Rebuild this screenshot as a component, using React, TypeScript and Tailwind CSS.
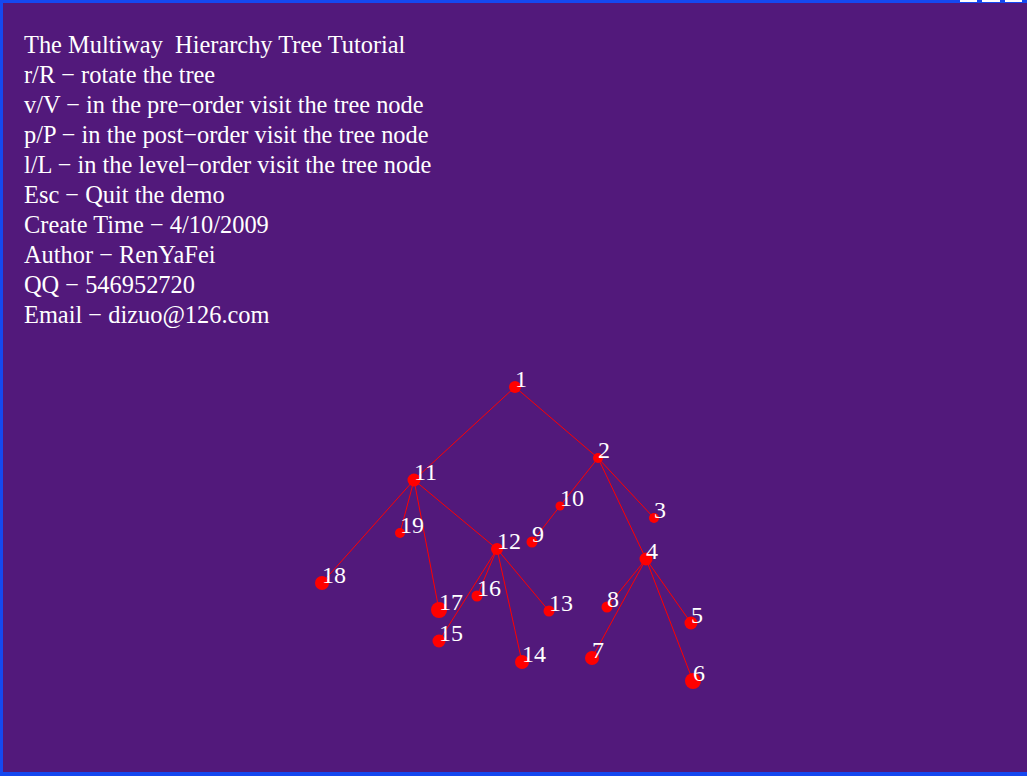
const lines = [
  'The Multiway  Hierarchy Tree Tutorial',
  'r/R − rotate the tree',
  'v/V − in the pre−order visit the tree node',
  'p/P − in the post−order visit the tree node',
  'l/L − in the level−order visit the tree node',
  'Esc − Quit the demo',
  'Create Time − 4/10/2009',
  'Author − RenYaFei',
  'QQ − 546952720',
  'Email − dizuo@126.com',
];

// node id -> [x, y, radius] in page coordinates
const nodes: Record<number, [number, number, number]> = {
  1: [515, 387, 6],
  2: [598, 458, 5],
  3: [654, 518, 5],
  4: [646, 559, 6.5],
  5: [691, 623, 6.5],
  6: [693, 681, 8],
  7: [592, 658, 7],
  8: [607, 607, 5.5],
  9: [532, 542, 5.5],
  10: [560, 506, 4.5],
  11: [414, 480, 6.5],
  12: [497, 549, 6],
  13: [549, 611, 5.5],
  14: [522, 662, 7],
  15: [439, 641, 6.5],
  16: [477, 596, 5.5],
  17: [439, 610, 8],
  18: [322, 583, 7],
  19: [400, 533, 5],
};

const edges: [number, number][] = [
  [1, 2], [1, 11], [2, 10], [10, 9], [2, 3], [2, 4],
  [4, 8], [4, 7], [4, 5], [4, 6],
  [11, 18], [11, 19], [11, 17], [11, 12],
  [12, 16], [12, 15], [12, 13], [12, 14],
];

export default function App() {
  return (
    <div className="relative w-[1027px] h-[776px] bg-[#52197b] border-t-[3px] border-l-[3px] border-b-[4px] border-r-0 border-[#1548f0]">
      {/* window buttons peeking in at the top right */}
      <div className="absolute -top-[3px] right-[5px] flex gap-[5px]">
        <div className="w-[17px] h-[2px] bg-white" />
        <div className="w-[18px] h-[2px] bg-white" />
        <div className="w-[17px] h-[2px] bg-white" />
      </div>

      <div className="pt-[27px] pl-[21px] text-white text-[24.4px] leading-[30px] font-['Liberation_Serif',serif] whitespace-pre">
        {lines.map((l) => (
          <div key={l}>{l}</div>
        ))}
      </div>

      <svg width="1024" height="439" viewBox="3 330 1024 439" className="block">
        {edges.map(([a, b]) => (
          <line
            key={`${a}-${b}`}
            x1={nodes[a][0]}
            y1={nodes[a][1]}
            x2={nodes[b][0]}
            y2={nodes[b][1]}
            stroke="#ff0000"
            strokeWidth={1}
          />
        ))}
        {Object.entries(nodes).map(([id, [x, y, r]]) => (
          <circle key={id} cx={x} cy={y} r={r} fill="#ff0000" />
        ))}
        {Object.entries(nodes).map(([id, [x, y]]) => (
          <text
            key={id}
            x={x}
            y={y}
            fill="#ffffff"
            fontSize={24}
            fontFamily="'Liberation Serif', serif"
          >
            {id}
          </text>
        ))}
      </svg>
    </div>
  );
}
